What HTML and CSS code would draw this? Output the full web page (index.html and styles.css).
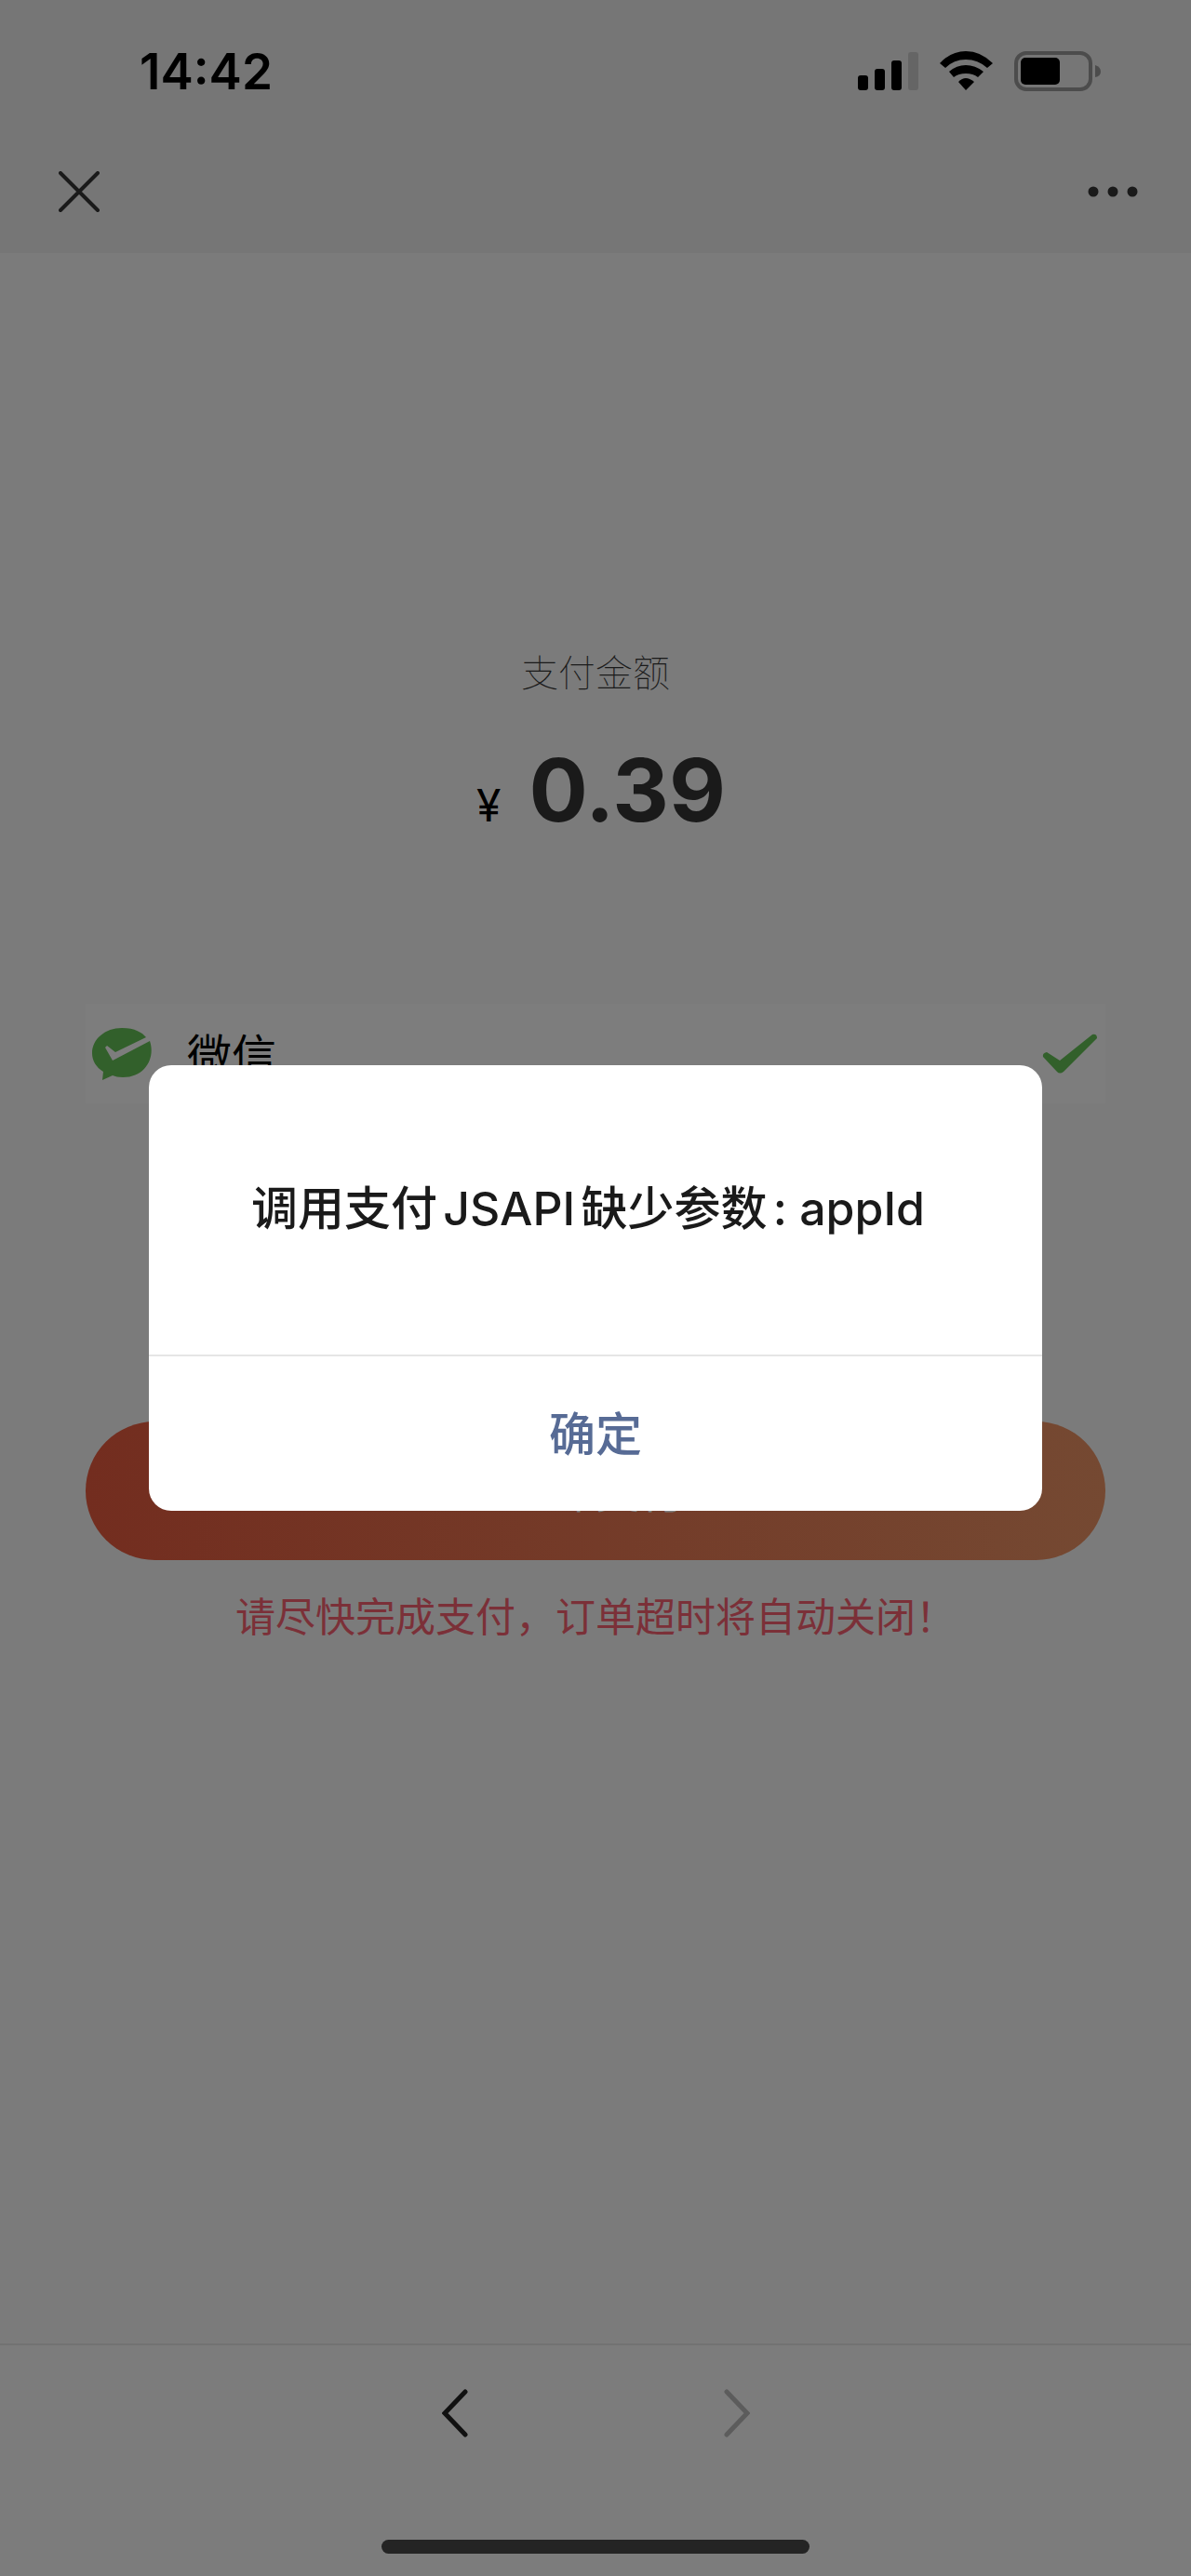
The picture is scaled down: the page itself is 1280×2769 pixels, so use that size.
FILE: index.html
```html
<!DOCTYPE html>
<html lang="zh-CN">
<head>
    <meta charset="UTF-8">
    <meta name="viewport" content="width=device-width, initial-scale=1.0">
    <title>支付</title>
    <link rel="stylesheet" href="styles.css">
</head>
<body>
    <div class="page">
        <header class="top">
            <div class="status-bar">
                <span class="time">14:42</span>
                <div class="status-icons">
                    <svg class="signal" width="65" height="44" viewBox="0 0 65 44">
                        <rect x="0" y="26" width="11" height="16" rx="3"/>
                        <rect x="18" y="19" width="11" height="23" rx="3"/>
                        <rect x="36" y="10" width="11" height="32" rx="3"/>
                        <rect class="dim" x="54" y="1" width="11" height="41" rx="3"/>
                    </svg>
                    <svg class="wifi" width="57" height="44" viewBox="0 0 57 44">
                        <path d="M0 13Q12 0 28 0T57 13L51 18Q41 9 28 9T6 18Z"/>
                        <path d="M10 22Q18 15 28 15T47 22L41 28Q36 24 28 24T15 28Z"/>
                        <path d="M20 33Q24 29 28 29T37 33L28 42Z"/>
                    </svg>
                    <svg class="battery" width="94" height="44" viewBox="0 0 94 44">
                        <rect class="case" x="2" y="2" width="80" height="39" rx="11"/>
                        <rect x="7" y="7" width="42" height="29" rx="5"/>
                        <path class="nub" d="M87 15Q93 17 93 22T87 28Z"/>
                    </svg>
                </div>
            </div>
            <nav class="title-bar">
                <button class="icon-btn" type="button" aria-label="关闭">
                    <svg width="44" height="44" viewBox="0 0 44 44">
                        <path class="line" d="M2 2L42 42M42 2L2 42"/>
                    </svg>
                </button>
                <button class="icon-btn" type="button" aria-label="更多">
                    <svg width="54" height="12" viewBox="0 0 54 12">
                        <circle cx="6" cy="6" r="5.500"/>
                        <circle cx="27" cy="6" r="5.500"/>
                        <circle cx="48" cy="6" r="5.500"/>
                    </svg>
                </button>
            </nav>
        </header>

        <main class="content">
            <p class="amount-label">支付金额</p>
            <p class="amount"><span class="currency">¥</span><span class="price">0.39</span></p>

            <div class="pay-method">
                <svg width="66" height="58" viewBox="0 0 66 58">
                    <path class="green" d="M32 1C46 1 54 6 58 11L25 27L16 20L14 22L22 36L62 15C68 32 58 54 33 54C28 54 25 53 22 52L11 57L12 48C4 43 0 36 0 28C0 13 14 1 32 1Z"/>
                </svg>
                <span class="method-name">微信</span>
                <svg width="60" height="44" viewBox="0 0 60 44">
                    <path class="green" d="M1 25Q0 21 5 20L19 29L54 1Q59 0 59 5L23 41Q19 44 16 41Z"/>
                </svg>
            </div>

            <button class="pay-btn" type="button">立即支付</button>
            <p class="tip">请尽快完成支付，订单超时将自动关闭！</p>
        </main>

        <footer class="toolbar">
            <div class="history">
                <button class="icon-btn" type="button" aria-label="后退">
                    <svg width="28" height="52" viewBox="0 0 28 52">
                        <path class="line back" d="M25 3L3 26L25 49"/>
                    </svg>
                </button>
                <button class="icon-btn" type="button" aria-label="前进" disabled>
                    <svg width="28" height="52" viewBox="0 0 28 52">
                        <path class="line forward" d="M3 3L25 26L3 49"/>
                    </svg>
                </button>
            </div>
            <div class="home-bar"></div>
        </footer>
    </div>

    <!-- Alert -->
    <div class="mask">
        <div class="dialog" role="alertdialog" aria-modal="true" aria-labelledby="msg">
            <p class="dialog-text" id="msg">调用支付JSAPI缺少参数: appId</p>
            <button class="dialog-btn" type="button">确定</button>
        </div>
    </div>
</body>
</html>
```

FILE: styles.css
```css
* {
    box-sizing: border-box;
}

body {
    margin: 0;
    font-family: Inter, "Noto Sans CJK SC", sans-serif;
    color: #000;
    background: #7b7b7b;
}

p {
    margin: 0;
}

button {
    padding: 0;
    border: 0;
    background: none;
    font-family: inherit;
}

svg {
    display: block;
    flex: none;
}

.page {
    display: flex;
    flex-direction: column;
    min-height: 100vh;
}

/* Status bar and title bar */
.top {
    background: #767676;
    padding-bottom: 40px;
}

.status-bar {
    display: flex;
    justify-content: space-between;
    align-items: center;
    padding: 45px 96px 43px 150px;
}

.time {
    font-size: 53px;
    font-weight: 600;
    line-height: 64px;
}

.status-icons {
    display: flex;
    gap: 23px;
}

.signal .dim {
    fill: #656565;
}

.battery .case {
    fill: none;
    stroke: #4c4c4c;
    stroke-width: 4;
}

.battery .nub {
    fill: #4c4c4c;
}

.title-bar {
    display: flex;
    justify-content: space-between;
    align-items: center;
    padding: 32px 57px 4px 63px;
}

.icon-btn {
    fill: #1a1a1a;
}

.line {
    fill: none;
    stroke: #1a1a1a;
    stroke-width: 4;
    stroke-linecap: round;
}

/* Payment */
.content {
    flex: 1;
    display: flex;
    flex-direction: column;
    padding: 422px 92px 0;
    text-align: center;
}

.amount-label {
    font-size: 40px;
    font-weight: 100;
    line-height: 60px;
    color: #1a1a1a;
}

.amount {
    display: flex;
    justify-content: center;
    align-items: baseline;
    gap: 30px;
    margin-top: 37px;
    padding-left: 12px;
    line-height: 116px;
}

.currency {
    font-size: 48px;
}

.price {
    font-size: 94px;
    font-weight: 700;
    color: #1a1a1a;
}

.pay-method {
    display: flex;
    align-items: center;
    height: 107px;
    margin-top: 155px;
    padding: 0 8px 0 7px;
    background: #7d7d7d;
}

.green {
    fill: #32602b;
}

.method-name {
    flex: 1;
    margin-left: 36px;
    padding-bottom: 4px;
    font-size: 48px;
    text-align: left;
}

.pay-btn {
    height: 149px;
    margin-top: 342px;
    padding-bottom: 5px;
    border-radius: 75px;
    background: linear-gradient(90deg, #732d1f, #754932);
    font-size: 48px;
    color: #7f7f7f;
}

.tip {
    margin-top: 29px;
    font-size: 43px;
    font-weight: 400;
    line-height: 64px;
    color: #7b3038;
}

/* Browser toolbar */
.toolbar {
    display: flex;
    flex-direction: column;
    align-items: center;
    padding: 47px 0 24px;
    border-top: 2px solid #727272;
    background: #7c7c7c;
}

.history {
    display: flex;
    gap: 275px;
}

.line.back {
    stroke: #111;
    stroke-width: 5;
}

.line.forward {
    stroke: #5c5c5c;
    stroke-width: 5;
}

.home-bar {
    width: 36%;
    height: 15px;
    margin-top: 110px;
    border-radius: 8px;
    background: #242424;
}

/* Dialog, the page behind it is already dimmed */
.mask {
    position: fixed;
    inset: 0;
    display: flex;
    align-items: center;
    justify-content: center;
}

.dialog {
    width: 75%;
    border-radius: 24px;
    overflow: hidden;
    background: #fff;
    text-align: center;
}

.dialog-text {
    padding: 121px 48px 124px 32px;
    font-size: 50px;
    font-weight: 500;
    line-height: 66px;
    text-autospace: normal;
    color: #1a1a1a;
}

.dialog-btn {
    width: 100%;
    height: 168px;
    padding-bottom: 6px;
    border-top: 2px solid #e5e5e5;
    font-size: 50px;
    font-weight: 500;
    color: #576b95;
}
```
